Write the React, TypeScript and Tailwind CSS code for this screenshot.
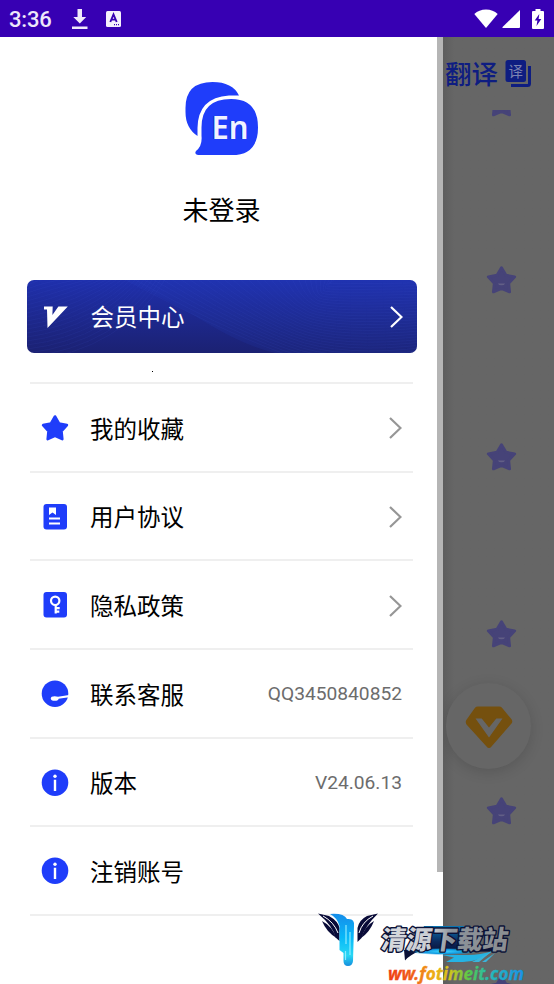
import type { ReactNode } from 'react';

const BLUE = '#1f3dfa';

function StatusBar() {
  return (
    <header className="flex h-[37px] shrink-0 items-center bg-[#3700b3] pl-[9px] pr-[9px] text-white">
      <span className="w-[61px] pt-[2px] font-['Roboto',sans-serif] text-[22px] leading-none font-medium tracking-[-0.2px] text-[#eee8fa]">3:36</span>
      <svg className="h-[22px] w-[20px]" viewBox="0 0 20 22" fill="#f0eafa">
        <path d="M7.500 1h4.500v8h4.200l-6.400 6.500L3.300 9h4.200zM2 18.600h15.500v2.300H2z" />
      </svg>
      <svg className="ml-[16px] h-[16px] w-[15px]" viewBox="0 0 15 16">
        <rect width="15" height="16" rx="1.500" fill="#f5f0fc" />
        <path d="M4.300 11 7.500 3.500l3.200 7.500M5.500 8.600h4" fill="none" stroke="#3700b3" strokeWidth="1.900" />
        <path d="M8 13.600h1M10 13.600h1M12 13.600h1" stroke="#3700b3" strokeWidth="1.200" />
      </svg>
      <div className="ml-auto flex items-center">
        <svg className="h-[20px] w-[24px]" viewBox="0 0 24 20" fill="#fff">
          <path d="M12 19 .3 5Q5 .5 12 .5T23.700 5z" />
        </svg>
        <svg className="ml-[4px] h-[18px] w-[18px]" viewBox="0 0 18 18" fill="#fff">
          <path d="M18 0v17q0 1-1 1H1.500Q-.3 18 .8 16.700z" />
        </svg>
        <svg className="ml-[11px] h-[20px] w-[14px]" viewBox="0 0 14 20">
          <path d="M4.500 0h5v2H12q1 0 1 1v16q0 1-1 1H2q-1 0-1-1V3q0-1 1-1h2.500z" fill="#fff" />
          <path d="M8.300 5 3.700 11.600h2.700L5.500 17l4.800-7H7.600z" fill="#3700b3" />
        </svg>
      </div>
    </header>
  );
}

function Logo() {
  return (
    <svg className="h-[76px] w-[76px]" viewBox="184 81 76 76">
      <path
        d="M197.500 136Q185.500 128 185.500 112v-4q0-26 27-26 20 0 26.500 13.500H229q-31 2-31.500 32.500z"
        fill={BLUE}
      />
      <path
        d="M231 99q27 0 27 28.500T230 155h-32q-4-.5-2-4 6.500-5 5.500-15v-8.500Q201.500 99 231 99z"
        fill={BLUE}
      />
      <text x="210.500" y="138.500" fill="#1127c4" fontFamily="Noto Sans, sans-serif" fontWeight="600" fontSize="32" textLength="37" lengthAdjust="spacingAndGlyphs">En</text>
      <text x="211.500" y="138.500" fill="#f1f3ff" fontFamily="Noto Sans, sans-serif" fontWeight="600" fontSize="32" textLength="37" lengthAdjust="spacingAndGlyphs">En</text>
    </svg>
  );
}

function Chevron({ color }: { color: string }) {
  return (
    <svg className="h-[24px] w-[14px]" viewBox="0 0 14 24" fill="none" stroke={color} strokeWidth="2.200">
      <path d="m2 2 10.500 10L2 22" />
    </svg>
  );
}

const starPath = 'M14 2.500l4 7 7.900 1.600-5.400 6 .8 8L14 21.800l-7.300 3.300.8-8-5.400-6L10 9.500z';

function StarIcon() {
  return (
    <svg className="h-[28px] w-[28px]" viewBox="0 0 28 28" fill={BLUE} stroke={BLUE} strokeWidth="2.600" strokeLinejoin="round">
      <path d={starPath} />
    </svg>
  );
}

function AgreementIcon() {
  return (
    <svg className="h-[28px] w-[28px]" viewBox="0 0 28 28">
      <rect x="2.500" y="1" width="23.500" height="25.500" rx="3" fill={BLUE} />
      <path d="M8 4.500h7V12l-3.500-2.500L8 12zM8 14.500h11v2H8zM8 19.500h11v2H8z" fill="#fff" />
    </svg>
  );
}

function PrivacyIcon() {
  return (
    <svg className="h-[28px] w-[28px]" viewBox="0 0 28 28">
      <rect x="2.500" y="1" width="23.500" height="25.500" rx="3" fill={BLUE} />
      <g fill="none" stroke="#fff" strokeWidth="2.200">
        <circle cx="14.200" cy="9.800" r="4.200" />
        <path d="M14.700 14v8.500M14.700 17.200h4M14.700 20.700h3.600" />
      </g>
    </svg>
  );
}

function ServiceIcon() {
  return (
    <svg className="h-[28px] w-[28px]" viewBox="0 0 28 28">
      <circle cx="14" cy="13.700" r="13.300" fill={BLUE} />
      <ellipse cx="13.700" cy="18.500" rx="3.900" ry="2.300" fill="#fff" />
      <path d="M14 17.300 28 15v2.300l-14 2z" fill="#fff" />
    </svg>
  );
}

function InfoIcon() {
  return (
    <svg className="h-[28px] w-[28px]" viewBox="0 0 28 28">
      <circle cx="14" cy="13.700" r="13.300" fill={BLUE} />
      <circle cx="14" cy="7.300" r="1.700" fill="#fff" />
      <path d="M12.800 10.700h2.400v11.300h-2.400z" fill="#fff" />
    </svg>
  );
}

interface MenuItem {
  icon: ReactNode;
  label: string;
  value?: string;
  arrow?: boolean;
}

const items: MenuItem[] = [
  { icon: <StarIcon />, label: '我的收藏', arrow: true },
  { icon: <AgreementIcon />, label: '用户协议', arrow: true },
  { icon: <PrivacyIcon />, label: '隐私政策', arrow: true },
  { icon: <ServiceIcon />, label: '联系客服', value: 'QQ3450840852' },
  { icon: <InfoIcon />, label: '版本', value: 'V24.06.13' },
  { icon: <InfoIcon />, label: '注销账号' },
];

// offsets for the fine curved lines on the member card
const waves = Array.from({ length: 30 }, (_, i) => i * 4);

function MemberCard() {
  return (
    <button className="relative flex h-[73px] w-[390px] items-center overflow-hidden rounded-[7px] bg-linear-to-b from-[#1f30ad] to-[#1b2172] pr-[14px] pl-[16px]">
      <svg className="absolute inset-0 h-full w-full" viewBox="0 0 390 73" fill="none">
        <path d="M99 0Q145 22 190 49q30 17 58 24h142V0z" fill="#2948cc" fillOpacity=".12" />
        <g stroke="#4d68dc" strokeOpacity=".13" strokeWidth=".7">
          {waves.map((y) => (
            <path key={y} d={`M${99 + y * 2} ${y * -0.2}Q${190 + y} ${49 - y * 0.4} ${255 + y * 0.4} ${73 - y * 0.6}T400 ${84 - y * 0.7}`} />
          ))}
          {waves.slice(0, 20).map((y) => (
            <path key={y} d={`M0 ${y + 5}Q${y + 20} ${y - 5} ${y + 65} -5`} />
          ))}
        </g>
      </svg>
      <svg className="relative h-[24px] w-[25px]" viewBox="0 0 25 24" fill="#fff">
        <path d="M1 1.500h8.700L9.400 10l6-8.500h9.400L4.500 23 4 4.500H1z" />
      </svg>
      <span className="relative ml-[23px] text-[23.500px] leading-none text-white">会员中心</span>
      <span className="relative ml-auto">
        <Chevron color="#fff" />
      </span>
    </button>
  );
}

function Drawer() {
  return (
    <aside className="relative flex w-[443px] shrink-0 flex-col items-center bg-white pt-[44px]">
      <Logo />
      <p className="mt-[37px] text-[26px] leading-[30px] text-black">未登录</p>
      <div className="mt-[56px]">
        <MemberCard />
      </div>
      <div className="flex h-[29px] w-[390px] items-end pb-[10px] pl-[125px]">
        <span className="h-[1px] w-[1px] bg-black" />
      </div>
      <ul className="w-[383px] border-t-2 border-[#efefef]">
        {items.map((item) => (
          <li key={item.label} className="flex h-[88.700px] items-center border-b-2 border-[#efefef] pt-px pr-[11px] pl-[11px]">
            {item.icon}
            <span className="ml-[21px] pt-px text-[23.500px] leading-none text-black">{item.label}</span>
            <span className="ml-auto pt-px font-['Roboto',sans-serif] text-[19.200px] text-[#6c6c6c]">
              {item.arrow ? <Chevron color="#969696" /> : item.value}
            </span>
          </li>
        ))}
      </ul>
      <div className="absolute top-0 right-0 h-[835px] w-[6px] bg-[#b5b5b5]" />
    </aside>
  );
}

function Background() {
  return (
    <main className="relative flex flex-1 flex-col overflow-hidden bg-linear-to-r from-[#5d5d5d] to-[#666] to-10%">
      <div className="flex h-[73px] shrink-0 items-center pl-[2px] text-[#0e1d81]">
        <span className="text-[26.500px] leading-none font-medium whitespace-nowrap">翻译</span>
        <svg className="ml-[7px] h-[28px] w-[27px]" viewBox="0 0 27 28">
          <path d="M24.500 6v17.500q0 2-2 2H6" fill="none" stroke="#0e1d81" strokeWidth="3" />
          <rect x=".5" width="20.500" height="22" rx="2.500" fill="#0e1d81" />
          <text x="3.500" y="16.500" fontSize="14.500" fill="#7b82b0" fontFamily="Noto Sans CJK SC, sans-serif">译</text>
        </svg>
      </div>
      <div className="flex-1 overflow-hidden">
        <div className="-mt-[96px] flex flex-col">
          {[0, 1, 2, 3, 4, 5].map((n) => (
            <div key={n} className="flex h-[177.200px] shrink-0 items-center pl-[43px]">
              <svg className="h-[30px] w-[31px]" viewBox="0 0 28 28" preserveAspectRatio="none">
                <path d={starPath} fill="#464378" stroke="#464378" strokeWidth="2.600" strokeLinejoin="round" />
                <path d="M10.800 17.200h6.400q-.5 1.800-3.200 1.800t-3.200-1.800z" fill="#625f86" />
              </svg>
            </div>
          ))}
        </div>
      </div>
      <div className="absolute top-[646px] left-[3px] flex h-[86px] w-[85px] items-center justify-center rounded-full bg-[#666] shadow-[0_3px_14px_rgba(0,0,0,0.14)]">
        <svg className="mt-[2px] h-[43px] w-[48px]" viewBox="0 0 48 43">
          <path d="M13 .5h21q2 0 3 1.300l9.500 11.500q1.500 2.200 0 4.200L26.500 40.500Q24 43.500 21.500 40.500L1.500 18.500q-1.500-2.500 0-4.700L10 1.800Q11 .5 13 .5z" fill="#75500e" />
          <path d="M10.500 12.500h6.200l7.300 9 7.300-9h6.200L24 31.500z" fill="#666" />
        </svg>
      </div>
    </main>
  );
}

function Watermark() {
  return (
    <svg className="absolute bottom-0 left-[310px] h-[74px] w-[244px]" viewBox="310 910 244 74">
      <defs>
        <linearGradient id="beam" x1="0" y1="0" x2="0" y2="1">
          <stop stopColor="#168dea" />
          <stop offset=".45" stopColor="#08b8f8" />
          <stop offset=".8" stopColor="#28d7f4" />
          <stop offset="1" stopColor="#158ddd" />
        </linearGradient>
        <linearGradient id="glow" x1="0" y1="0" x2="0" y2="1">
          <stop stopColor="#0a77b4" />
          <stop offset=".6" stopColor="#0b2a5e" />
          <stop offset="1" stopColor="#0a1238" />
        </linearGradient>
        <radialGradient id="flare">
          <stop stopColor="#3fd4ff" />
          <stop offset=".6" stopColor="#109ae0" />
          <stop offset="1" stopColor="#109ae0" stopOpacity="0" />
        </radialGradient>
        <linearGradient id="site" gradientUnits="userSpaceOnUse" x1="388" y1="0" x2="524" y2="0">
          <stop stopColor="#ee3b14" />
          <stop offset=".2" stopColor="#f0641c" />
          <stop offset=".32" stopColor="#efa816" />
          <stop offset=".45" stopColor="#d7c31b" />
          <stop offset=".6" stopColor="#53c94b" />
          <stop offset=".75" stopColor="#24b8ba" />
          <stop offset="1" stopColor="#1b91e8" />
        </linearGradient>
        <linearGradient id="name" gradientUnits="userSpaceOnUse" x1="0" y1="0" x2="127" y2="0">
          <stop stopColor="#d9dbdf" />
          <stop offset=".4" stopColor="#c9ccd2" />
          <stop offset=".55" stopColor="#8b9299" />
          <stop offset="1" stopColor="#8b8e92" />
        </linearGradient>
      </defs>
      <g fill="#090b38">
        <path d="M318 913.500 329 916q9 5 10.500 12v13l-4-3.500Q333 926 318 913.500z" />
        <path d="M322 921q10 5 14.500 17-10-6-14.500-17z" />
        <path d="M378 913.500 367 916q-8 4-9.500 12v14l4-4Q365 926 378 913.500z" />
        <path d="M374 921q-9 5-13 17 9-6 13-17z" />
      </g>
      <path d="M323 916q11 6 15 17M373 916q-11 6-14 17" stroke="#fff" strokeWidth="1" fill="none" />
      <path d="M330 914q14-1 17 5 8-1 7 7l-1 35q-.5 5-5 5t-4.500-5v-8l-4-3v-24q-2-8-9.500-12z" fill="url(#beam)" />
      <path d="M346 925v19M350 932v23M345.500 951v9" stroke="#8becff" strokeWidth="1.200" fill="none" />
      <path d="M424 926h40l-7 26h-42z" fill="url(#glow)" />
      <path d="m404 950 16-1h84l2 2.500-88 .5q-7 2-13 8.500z" fill="#0a1036" />
      <ellipse cx="443" cy="951.500" rx="34" ry="3.500" fill="url(#flare)" />
      <path d="M442 955h26q12 0 25-4-14 11-30 11h-17l8-4.500z" fill="#25b3e4" />
      <path d="m472 962 20-11-13 11zM482 962l13-9-9 9z" fill="#3ab4dc" />
      <text
        transform="translate(380 948.500) skewX(-8)"
        fontFamily="Noto Sans CJK SC, sans-serif"
        fontWeight="900"
        fontSize="26"
        textLength="127"
        lengthAdjust="spacingAndGlyphs"
        fill="url(#name)"
        stroke="#0b1237"
        strokeWidth="2.800"
        strokeLinejoin="round"
        paintOrder="stroke"
      >
        清源下载站
      </text>
      <text
        x="388"
        y="980"
        fontFamily="Noto Sans, sans-serif"
        fontWeight="700"
        fontStyle="italic"
        fontSize="17"
        textLength="136"
        lengthAdjust="spacingAndGlyphs"
        fill="url(#site)"
        stroke="url(#site)"
        strokeWidth=".3"
      >
        ww.fotimeit.com
      </text>
    </svg>
  );
}

export default function App() {
  return (
    <div className="relative flex h-[984px] w-[554px] flex-col overflow-hidden font-['Noto_Sans_CJK_SC',sans-serif]">
      <StatusBar />
      <div className="flex min-h-0 flex-1">
        <Drawer />
        <Background />
      </div>
      <Watermark />
    </div>
  );
}
